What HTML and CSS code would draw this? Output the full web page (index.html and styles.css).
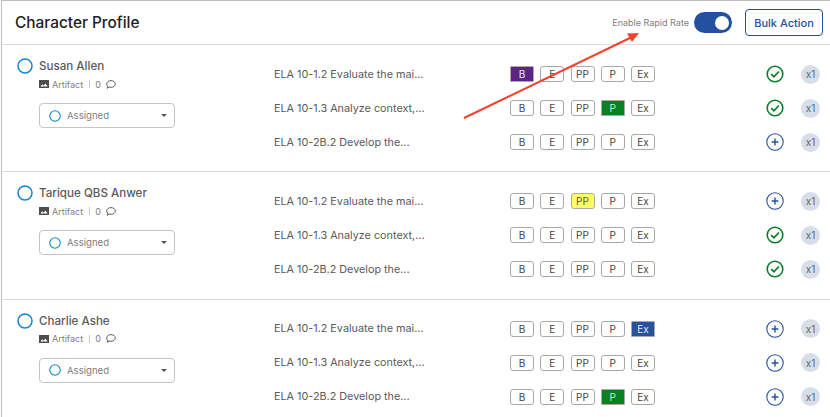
FILE: index.html
```html
<!DOCTYPE html>
<html lang="en">
<head>
<meta charset="utf-8">
<title>Character Profile</title>
<link rel="stylesheet" href="styles.css">
</head>
<body>
<svg width="0" height="0" class="defs">
  <symbol id="ring" viewBox="0 0 16 16"><circle cx="8" cy="8" r="7" fill="none" stroke="#1287c9" stroke-width="1.5"/></symbol>
  <symbol id="check" viewBox="0 0 18 18"><circle cx="9" cy="9" r="7.800" fill="none" stroke="#0b7d2a" stroke-width="1.6"/><path d="M5.200 9.200l2.700 2.600 5-5.300" fill="none" stroke="#0b7d2a" stroke-width="1.800"/></symbol>
  <symbol id="plus" viewBox="0 0 18 18"><circle cx="9" cy="9" r="8.200" fill="none" stroke="#23509f" stroke-width="1.100"/><path d="M5.600 9h6.800M9 5.600v6.800" fill="none" stroke="#23509f" stroke-width="1.400"/></symbol>
  <symbol id="image" viewBox="0 0 10 8"><path fill-rule="evenodd" d="M0 0h10v8H0zM1.300 6.500h7.400L6.400 3.500 4.600 5.700 3.300 4.300z" fill="#4d4d4d"/></symbol>
  <symbol id="bubble" viewBox="0 0 10 9"><path d="M5 .6c2.300 0 4.300 1.400 4.300 3.400S7.300 7.300 5 7.300c-.6 0-1.200-.1-1.700-.3L1.200 8.300l.5-2.100C1 5.600.7 4.800.7 4 .7 2 2.700.6 5 .6z" fill="none" stroke="#4d4d4d" stroke-width=".9"/></symbol>
</svg>
<main class="page">
  <header class="topbar">
    <h1 class="title">Character Profile</h1>
    <div class="actions">
      <span class="rapid-label">Enable Rapid Rate</span>
      <span class="toggle"><span class="knob"></span></span>
      <button class="bulk" type="button">Bulk Action</button>
    </div>
  </header>

  <section class="student">
    <div class="person">
      <div class="name-line"><svg class="ring"><use href="#ring"/></svg><span class="name">Susan Allen</span></div>
      <div class="meta"><svg class="img-icon"><use href="#image"/></svg><span>Artifact</span><span class="sep"></span><span>0</span><svg class="bubble"><use href="#bubble"/></svg></div>
      <div class="select"><svg class="ring-small"><use href="#ring"/></svg><span class="select-text">Assigned</span><span class="caret"></span></div>
    </div>
    <div class="rows">
      <div class="row"><span class="standard">ELA 10-1.2 Evaluate the mai...</span><div class="chips"><span class="chip purple">B</span><span class="chip">E</span><span class="chip">PP</span><span class="chip">P</span><span class="chip">Ex</span></div><svg class="status"><use href="#check"/></svg><span class="count">x1</span></div>
      <div class="row"><span class="standard">ELA 10-1.3 Analyze context,...</span><div class="chips"><span class="chip">B</span><span class="chip">E</span><span class="chip">PP</span><span class="chip green">P</span><span class="chip">Ex</span></div><svg class="status"><use href="#check"/></svg><span class="count">x1</span></div>
      <div class="row"><span class="standard">ELA 10-2B.2 Develop the...</span><div class="chips"><span class="chip">B</span><span class="chip">E</span><span class="chip">PP</span><span class="chip">P</span><span class="chip">Ex</span></div><svg class="status"><use href="#plus"/></svg><span class="count">x1</span></div>
    </div>
  </section>

  <section class="student">
    <div class="person">
      <div class="name-line"><svg class="ring"><use href="#ring"/></svg><span class="name">Tarique QBS Anwer</span></div>
      <div class="meta"><svg class="img-icon"><use href="#image"/></svg><span>Artifact</span><span class="sep"></span><span>0</span><svg class="bubble"><use href="#bubble"/></svg></div>
      <div class="select"><svg class="ring-small"><use href="#ring"/></svg><span class="select-text">Assigned</span><span class="caret"></span></div>
    </div>
    <div class="rows">
      <div class="row"><span class="standard">ELA 10-1.2 Evaluate the mai...</span><div class="chips"><span class="chip">B</span><span class="chip">E</span><span class="chip yellow">PP</span><span class="chip">P</span><span class="chip">Ex</span></div><svg class="status"><use href="#plus"/></svg><span class="count">x1</span></div>
      <div class="row"><span class="standard">ELA 10-1.3 Analyze context,...</span><div class="chips"><span class="chip">B</span><span class="chip">E</span><span class="chip">PP</span><span class="chip">P</span><span class="chip">Ex</span></div><svg class="status"><use href="#check"/></svg><span class="count">x1</span></div>
      <div class="row"><span class="standard">ELA 10-2B.2 Develop the...</span><div class="chips"><span class="chip">B</span><span class="chip">E</span><span class="chip">PP</span><span class="chip">P</span><span class="chip">Ex</span></div><svg class="status"><use href="#check"/></svg><span class="count">x1</span></div>
    </div>
  </section>

  <section class="student">
    <div class="person">
      <div class="name-line"><svg class="ring"><use href="#ring"/></svg><span class="name">Charlie Ashe</span></div>
      <div class="meta"><svg class="img-icon"><use href="#image"/></svg><span>Artifact</span><span class="sep"></span><span>0</span><svg class="bubble"><use href="#bubble"/></svg></div>
      <div class="select"><svg class="ring-small"><use href="#ring"/></svg><span class="select-text">Assigned</span><span class="caret"></span></div>
    </div>
    <div class="rows">
      <div class="row"><span class="standard">ELA 10-1.2 Evaluate the mai...</span><div class="chips"><span class="chip">B</span><span class="chip">E</span><span class="chip">PP</span><span class="chip">P</span><span class="chip blue">Ex</span></div><svg class="status"><use href="#plus"/></svg><span class="count">x1</span></div>
      <div class="row"><span class="standard">ELA 10-1.3 Analyze context,...</span><div class="chips"><span class="chip">B</span><span class="chip">E</span><span class="chip">PP</span><span class="chip">P</span><span class="chip">Ex</span></div><svg class="status"><use href="#plus"/></svg><span class="count">x1</span></div>
      <div class="row"><span class="standard">ELA 10-2B.2 Develop the...</span><div class="chips"><span class="chip">B</span><span class="chip">E</span><span class="chip">PP</span><span class="chip green">P</span><span class="chip">Ex</span></div><svg class="status"><use href="#plus"/></svg><span class="count">x1</span></div>
    </div>
  </section>

  <span class="edge-mark"></span>
  <svg class="arrow" width="200" height="100" viewBox="0 0 200 100"><path d="M4 95 172 14" stroke="#f4412d" stroke-width="2" fill="none"/><path d="M179 10 167 10.500 172 19z" fill="#f4412d"/></svg>
</main>
</body>
</html>
```
FILE: styles.css
```css
* { box-sizing: border-box; }
html, body { margin: 0; height: 417px; overflow: hidden; background: #fff; }
body { font-family: Inter, "Liberation Sans", sans-serif; color: #4f4f4f; }
.defs { position: absolute; }
.page { position: relative; height: 417px; margin-left: 1px; border-top: 1px solid #bdbdbd; border-left: 1px solid #bdbdbd; overflow: hidden; }

.topbar { display: flex; align-items: center; justify-content: space-between; height: 44px; padding: 0 7px 0 13px; border-bottom: 1px solid #dcdcdc; }
.title { margin: 0; font-size: 15.4px; line-height: 20px; font-weight: 500; color: #212121; }
.actions { display: flex; align-items: center; }
.rapid-label { font-size: 9px; color: #808080; }
.toggle { display: flex; align-items: center; justify-content: flex-end; width: 38px; height: 21px; margin: 0 13px 0 5px; padding-right: 3px; background: #23509f; border-radius: 11px; }
.knob { width: 14px; height: 14px; border-radius: 50%; background: #fff; }
.bulk { width: 78px; height: 27px; padding: 0; font: 500 11px Inter, "Liberation Sans", sans-serif; color: #23509f; background: #fff; border: 1px solid #23509f; border-radius: 4px; }

.student { display: flex; height: 127.5px; padding: 12px 0 0 15px; border-bottom: 1px solid #dcdcdc; }
.student:first-of-type { height: 127px; }
.person { width: 257px; flex: none; }
.name-line { display: flex; align-items: center; height: 18px; margin-bottom: 3px; }
.ring { width: 16px; height: 16px; margin-right: 6px; flex: none; }
.name { font-size: 11.6px; font-weight: 500; color: #5a5a5a; }
.meta { display: flex; align-items: center; height: 12px; padding-left: 22px; font-size: 9px; color: #808080; }
.img-icon { width: 10px; height: 8px; margin-right: 3px; }
.sep { width: 1px; height: 8px; margin: 0 5px 0 6px; background: #c8c8c8; }
.bubble { width: 10px; height: 9px; margin-left: 5px; }
.select { display: flex; align-items: center; width: 136px; height: 25px; margin: 13px 0 0 22px; padding: 0 6px 0 9px; border: 1px solid #c4c4c4; border-radius: 4px; }
.ring-small { width: 12px; height: 12px; margin-right: 6px; flex: none; }
.select-text { flex: 1; font-size: 9.6px; color: #808080; }
.caret { width: 0; height: 0; border-left: 3px solid transparent; border-right: 3px solid transparent; border-top: 3px solid #555; margin-right: 1px; }

.rows { display: flex; flex-direction: column; flex: 1; }
.row { display: flex; align-items: center; height: 34px; }
.standard { width: 236px; flex: none; font-size: 10.8px; color: #5a5a5a; white-space: nowrap; }
.chips { display: flex; gap: 6.25px; width: 256px; flex: none; }
.chip { display: flex; align-items: center; justify-content: center; width: 24px; height: 16px; font-size: 10px; color: #444; background: #fff; border: 1px solid #a8a8a8; border-radius: 3px; }
.purple { background: #5c2484; color: #f2e8f7; border-radius: 1px; }
.green { background: #06821f; color: #cfe8d2; border-radius: 1px; }
.yellow { background: #ffff66; color: #555; }
.blue { background: #2a5298; color: #dfe6f2; border-radius: 1px; }
.status { width: 18px; height: 18px; flex: none; margin-right: 17px; }
.count { display: flex; align-items: center; justify-content: center; width: 19px; height: 19px; flex: none; border-radius: 50%; background: #d7deea; font-size: 10px; color: #666; }

.edge-mark { position: absolute; left: -2px; top: 236px; width: 1px; height: 32px; background: #23509f; }
.arrow { position: absolute; left: 458px; top: 22px; pointer-events: none; }
```
